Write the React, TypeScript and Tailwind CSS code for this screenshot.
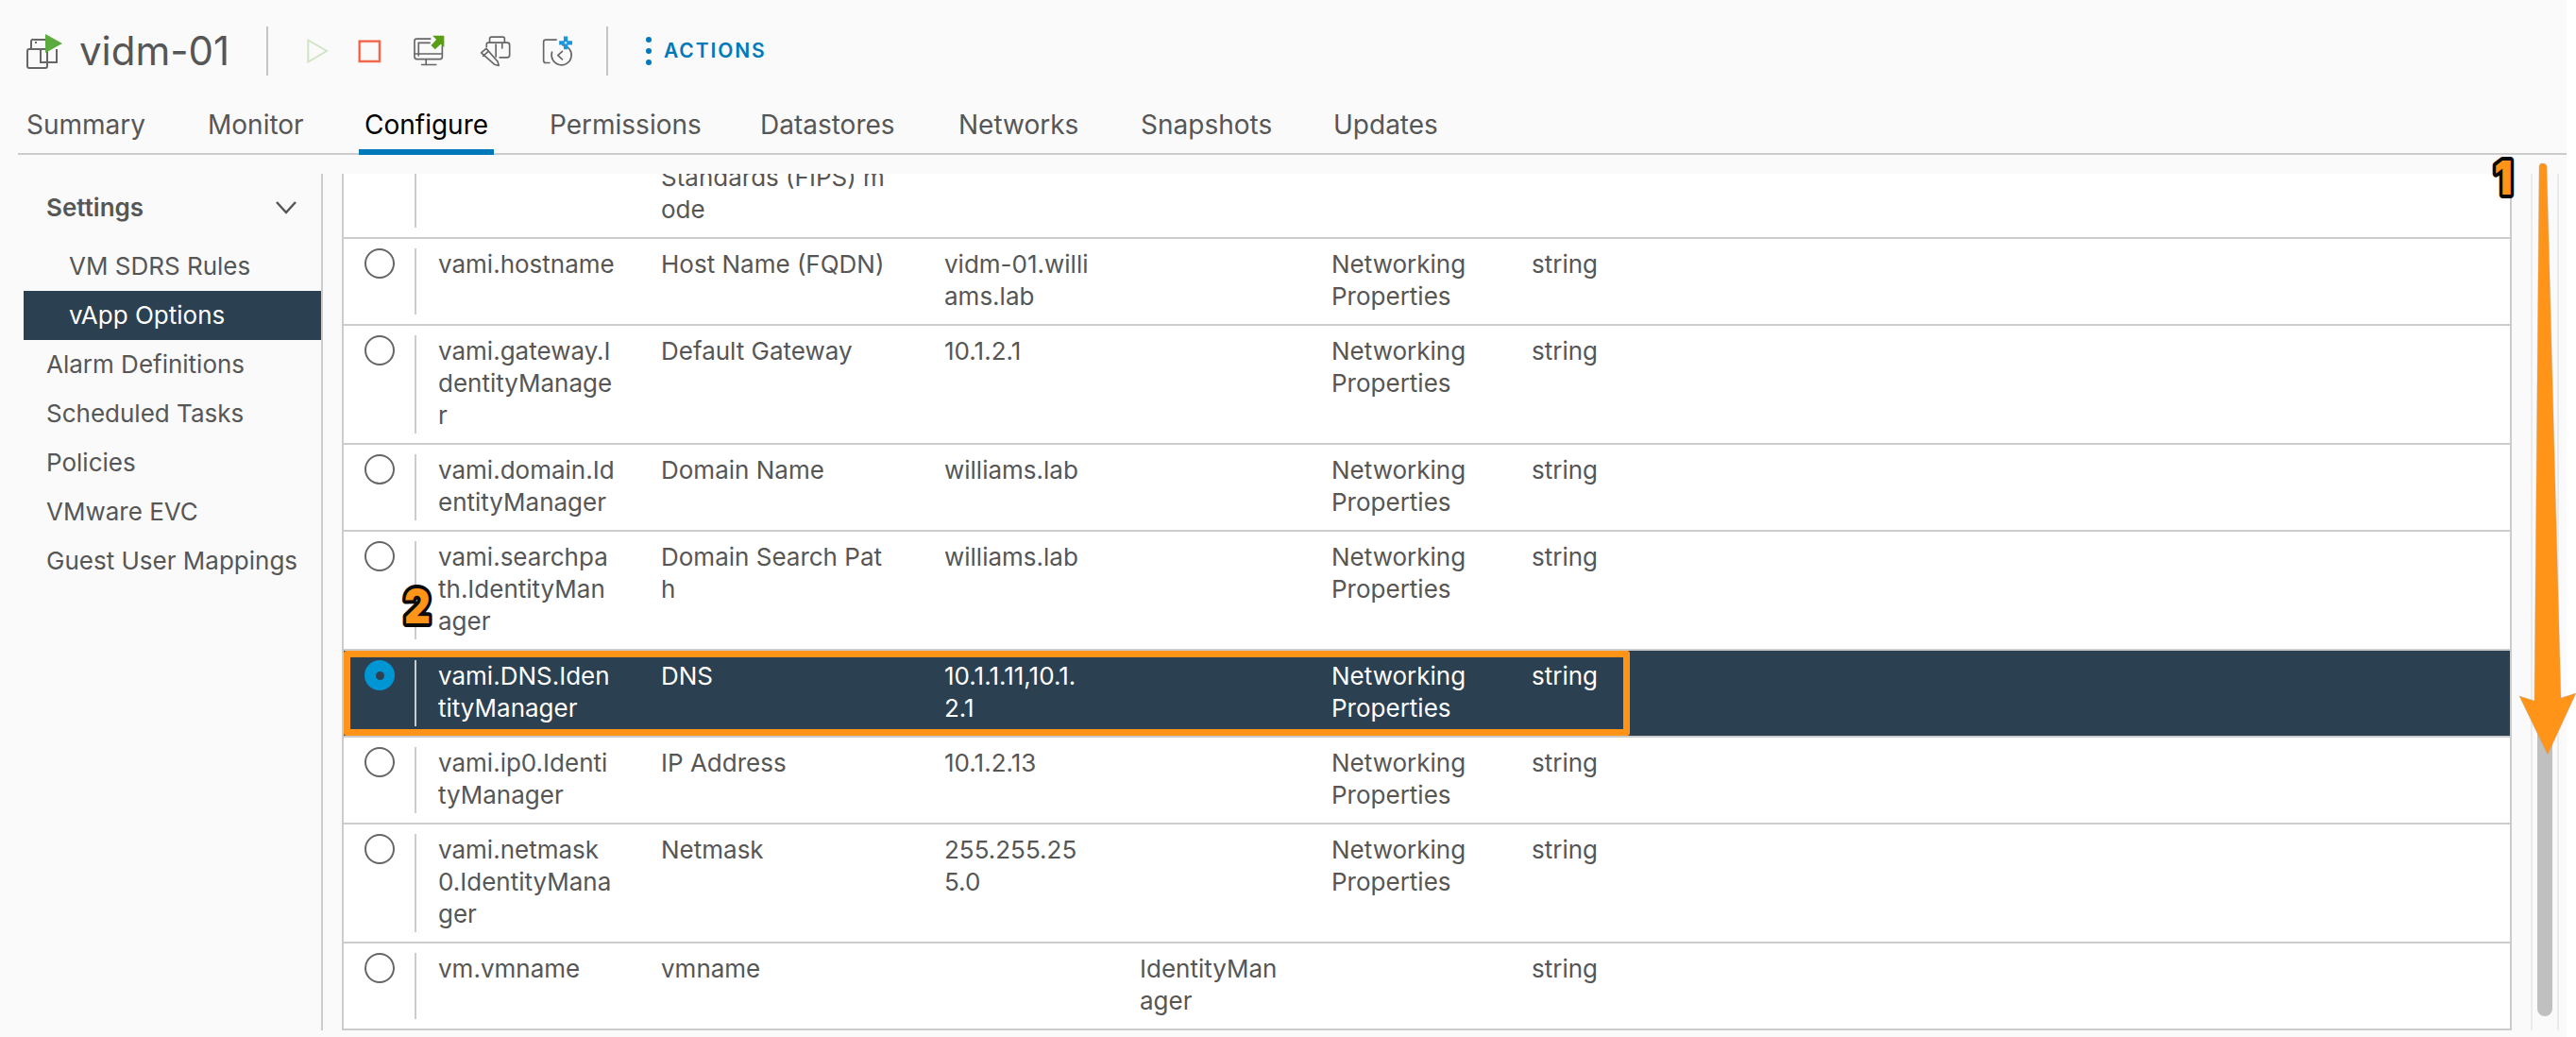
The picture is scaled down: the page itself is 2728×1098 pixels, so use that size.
const rows = [
  { name: "vami.hostname", label: "Host Name (FQDN)", value: "vidm-01.willi\nams.lab", category: "Networking\nProperties" },
  { name: "vami.gateway.I\ndentityManage\nr", label: "Default Gateway", value: "10.1.2.1", category: "Networking\nProperties" },
  { name: "vami.domain.Id\nentityManager", label: "Domain Name", value: "williams.lab", category: "Networking\nProperties" },
  { name: "vami.searchpa\nth.IdentityMan\nager", label: "Domain Search Pat\nh", value: "williams.lab", category: "Networking\nProperties" },
  { name: "vami.DNS.Iden\ntityManager", label: "DNS", value: "10.1.1.11,10.1.\n2.1", category: "Networking\nProperties", selected: true },
  { name: "vami.ip0.Identi\ntyManager", label: "IP Address", value: "10.1.2.13", category: "Networking\nProperties" },
  { name: "vami.netmask\n0.IdentityMana\nger", label: "Netmask", value: "255.255.25\n5.0", category: "Networking\nProperties" },
  { name: "vm.vmname", label: "vmname", scope: "IdentityMan\nager" },
];

const tabs = [
  { label: "Summary", width: "w-[192px]" },
  { label: "Monitor", width: "w-[166px]" },
  { label: "Configure", width: "w-[196px]", active: true },
  { label: "Permissions", width: "w-[223px]" },
  { label: "Datastores", width: "w-[210px]" },
  { label: "Networks", width: "w-[193px]" },
  { label: "Snapshots", width: "w-[204px]" },
  { label: "Updates", width: "w-[180px]" },
];

const settingsLinks = ["VM SDRS Rules", "vApp Options"];
const sideLinks = ["Alarm Definitions", "Scheduled Tasks", "Policies", "VMware EVC", "Guest User Mappings"];

function VmIcon() {
  return (
    <svg width="38" height="37" viewBox="0 0 38 37" fill="none" stroke="#666" strokeWidth="2">
      <path d="M20 6H8a2 2 0 0 0-3 2v8M14 6h6" />
      <rect x="1" y="16" width="21" height="20" rx="2" />
      <path d="M15 16v14h17V16" />
      <path d="M9 9h2M15 22v-2" />
      <path d="M20 0l18 10-18 10z" fill="#5cab3f" stroke="none" />
    </svg>
  );
}

function PlayIcon() {
  return (
    <svg width="25" height="30" viewBox="66 70 76 90" fill="none" stroke="#d3e4c5" strokeWidth="6">
      <path d="M73 80l60 35-60 35z" />
    </svg>
  );
}

function StopIcon() {
  return (
    <svg width="25" height="25" viewBox="236 78 74 74" fill="none">
      <rect x="241" y="83" width="63" height="63" stroke="#f9c5b9" strokeWidth="10" />
      <rect x="241" y="83" width="63" height="63" stroke="#f1573b" strokeWidth="5" />
    </svg>
  );
}

function ConsoleIcon() {
  return (
    <svg width="33" height="34" viewBox="418 68 100 102" fill="none" stroke="#666" strokeWidth="5" strokeLinecap="round">
      <path d="M472 80h-44a7 7 0 0 0-7 7v51a7 7 0 0 0 7 7h75a7 7 0 0 0 7-7v-36" />
      <path d="M434 134V93h36M421 128h89M458 146v14M444 163h46" />
      <path d="M479 70h37v37l-11-10-18 17-13-13 17-18z" fill="#5a9e14" stroke="none" />
    </svg>
  );
}

function SnapshotEditIcon() {
  return (
    <svg width="33" height="34" viewBox="628 70 100 102" fill="none" stroke="#666" strokeWidth="5" strokeLinecap="round" strokeLinejoin="round">
      <path d="M660 94V82a6 6 0 0 1 6-6h36a6 6 0 0 1 6 6v12" />
      <path d="M650 108v-8a6 6 0 0 1 6-6h60a8 8 0 0 1 8 8v32a8 8 0 0 1-8 8h-24" />
      <path d="M680 140v-40M700 96v16" />
      <path d="M633 127l16-14 37 42 3 13-14-4z" />
      <path d="M639 137l15-13" />
    </svg>
  );
}

function HistoryIcon() {
  return (
    <svg width="33" height="34" viewBox="826 60 100 102" fill="none" strokeLinecap="round" strokeLinejoin="round">
      <path d="M872 75h-34a7 7 0 0 0-7 7v60a7 7 0 0 0 7 7h12" stroke="#666" strokeWidth="5" />
      <path d="M892 92a32 32 0 1 1-34 22" stroke="#666" strokeWidth="5" />
      <path d="M891 112l-14 13 14 13" stroke="#666" strokeWidth="5" />
      <path d="M902 64v42M881 85h42" stroke="#1b95de" strokeWidth="13" strokeLinecap="butt" />
      <path d="M902 81v8M898 85h8" stroke="#cfe6f5" strokeWidth="4" strokeLinecap="butt" />
    </svg>
  );
}

function Radio({ selected }: { selected?: boolean }) {
  if (selected) {
    return (
      <div className="flex h-[32px] w-[32px] shrink-0 items-center justify-center rounded-full bg-[#0095d3]">
        <div className="h-[9px] w-[9px] rounded-full bg-[#2b4050]" />
      </div>
    );
  }
  return <div className="h-[32px] w-[32px] shrink-0 rounded-full border-2 border-[#666] bg-white" />;
}

function Callout({ text, className }: { text: string; className: string }) {
  return (
    <svg className={`overflow-visible ${className}`} width="70" height="76" viewBox="0 0 70 76">
      <text
        x="40.7"
        y="58"
        textAnchor="middle"
        transform="scale(0.86 1)"
        fontFamily="Inter, sans-serif"
        fontWeight="900"
        fontSize="50"
        fill="#ff9419"
        stroke="#0a0a0a"
        strokeWidth="8"
        strokeLinejoin="round"
        paintOrder="stroke"
      >
        {text}
      </text>
    </svg>
  );
}

function Arrow() {
  return (
    <svg className="absolute left-[2660px] top-[168px]" width="68" height="636" viewBox="0 0 68 636">
      <path
        d="M32 5c-2 0-3 2-3 3l-5 566-16-5 30 62 30-65-16 5-15-563c0-1-1-3-5-3z"
        fill="#ff9419"
        stroke="#a8a8a8"
        strokeOpacity="0.35"
        strokeWidth="1"
      />
    </svg>
  );
}

function TableRow({ row }: { row: (typeof rows)[number] }) {
  return (
    <div
      className={`relative grid grid-cols-[100px_236px_300px_207px_203px_212px_1fr] border-b-2 border-[#ccc] ${
        row.selected ? "bg-[#2b4050] text-white" : ""
      }`}
    >
      <div className="flex py-[10px] pl-[22px]">
        <Radio selected={row.selected} />
        <div className="ml-[21px] w-[2px] bg-[#ccc]" />
      </div>
      <div className="whitespace-pre-line pb-[12px] pt-[10px]">{row.name}</div>
      <div className="whitespace-pre-line pb-[12px] pt-[10px]">{row.label}</div>
      <div className="whitespace-pre-line pb-[12px] pt-[10px]">{row.value}</div>
      <div className="whitespace-pre-line pb-[12px] pt-[10px]">{row.scope}</div>
      <div className="whitespace-pre-line pb-[12px] pt-[10px]">{row.category}</div>
      <div className="pb-[12px] pt-[10px]">string</div>
      {row.selected && (
        <div className="absolute left-0 top-0 h-full w-[1362px] rounded-[3px] border-[7px] border-[#ff9419]" />
      )}
    </div>
  );
}

export default function App() {
  return (
    <div className="relative h-[1098px] w-[2728px] overflow-hidden bg-white font-['Inter',sans-serif] text-[#565656]">
      <div className="flex h-full w-[2718px] flex-col bg-[#fafafa]">
        <header className="flex h-[80px] items-end pl-[28px]">
          <div className="flex h-[52px] items-center">
            <VmIcon />
            <h1 className="ml-[18px] w-[198px] text-[42px] font-normal leading-none">vidm-01</h1>
            <div className="h-[52px] w-[2px] bg-[#c4c4c4]" />
            <div className="ml-[40px] w-[55px]"><PlayIcon /></div>
            <div className="w-[59px]"><StopIcon /></div>
            <div className="w-[70px]"><ConsoleIcon /></div>
            <div className="w-[66px]"><SnapshotEditIcon /></div>
            <div className="w-[68px]"><HistoryIcon /></div>
            <div className="h-[52px] w-[2px] bg-[#c4c4c4]" />
            <div className="ml-[40px] flex h-[30px] w-[5px] flex-col justify-between">
              <div className="h-[6px] w-[6px] rounded-full bg-[#0079b8]" />
              <div className="h-[6px] w-[6px] rounded-full bg-[#0079b8]" />
              <div className="h-[6px] w-[6px] rounded-full bg-[#0079b8]" />
            </div>
            <span className="ml-[14px] text-[21px] font-semibold tracking-[1.9px] text-[#0079b8]">ACTIONS</span>
          </div>
        </header>

        <nav className="ml-[19px] mt-[22px] flex h-[62px] border-b-2 border-[#ccc] pl-[9px] text-[28px]">
          {tabs.map((tab) => (
            <a key={tab.label} className={`relative block h-[62px] pt-[13px] leading-[34px] ${tab.width} ${tab.active ? "text-black" : ""}`}>
              {tab.label}
              {tab.active && <span className="absolute -left-[6px] bottom-0 h-[6px] w-[143px] bg-[#0079b8]" />}
            </a>
          ))}
        </nav>

        <main className="mt-[20px] flex h-[907px] text-[26px] leading-[34px]">
          <aside className="w-[342px] shrink-0 border-r-2 border-[#ccc] pl-[25px]">
            <div className="flex h-[72px] items-center justify-between pl-[24px] pr-[26px] font-semibold">
              <span>Settings</span>
              <svg width="22" height="14" viewBox="0 0 22 14" fill="none" stroke="#565656" strokeWidth="2.5">
                <path d="M1 1l10 11L21 1" />
              </svg>
            </div>
            {settingsLinks.map((link) => (
              <div key={link} className={`flex h-[52px] items-center pl-[48px] ${link === "vApp Options" ? "bg-[#2b4050] text-white" : ""}`}>
                {link}
              </div>
            ))}
            {sideLinks.map((link) => (
              <div key={link} className="flex h-[52px] items-center pl-[24px]">
                {link}
              </div>
            ))}
          </aside>

          <div className="ml-[20px] flex h-[907px] w-[2298px] flex-col overflow-hidden border-x-2 border-b-2 border-[#ccc] bg-white">
            <div className="grid h-[69px] shrink-0 grid-cols-[100px_236px_1fr] grid-rows-[67px] overflow-hidden border-b-2 border-[#ccc]">
              <div className="flex pb-[10px] pl-[75px]">
                <div className="w-[2px] bg-[#ccc]" />
              </div>
              <div />
              <div className="flex flex-col justify-end whitespace-pre-line pb-[12px]">{"Standards (FIPS) m\node"}</div>
            </div>
            {rows.map((row) => (
              <TableRow key={row.name} row={row} />
            ))}
          </div>

          <div className="ml-[20px] flex h-[907px] w-[30px] justify-center border-x-2 border-[#ebebeb]">
            <div className="mt-[586px] h-[306px] w-[16px] rounded-full bg-[#c0c0c0]" />
          </div>
        </main>
      </div>

      <Arrow />
      <Callout text="1" className="absolute left-[2616px] top-[148px]" />
      <Callout text="2" className="absolute left-[407px] top-[602px]" />
    </div>
  );
}
